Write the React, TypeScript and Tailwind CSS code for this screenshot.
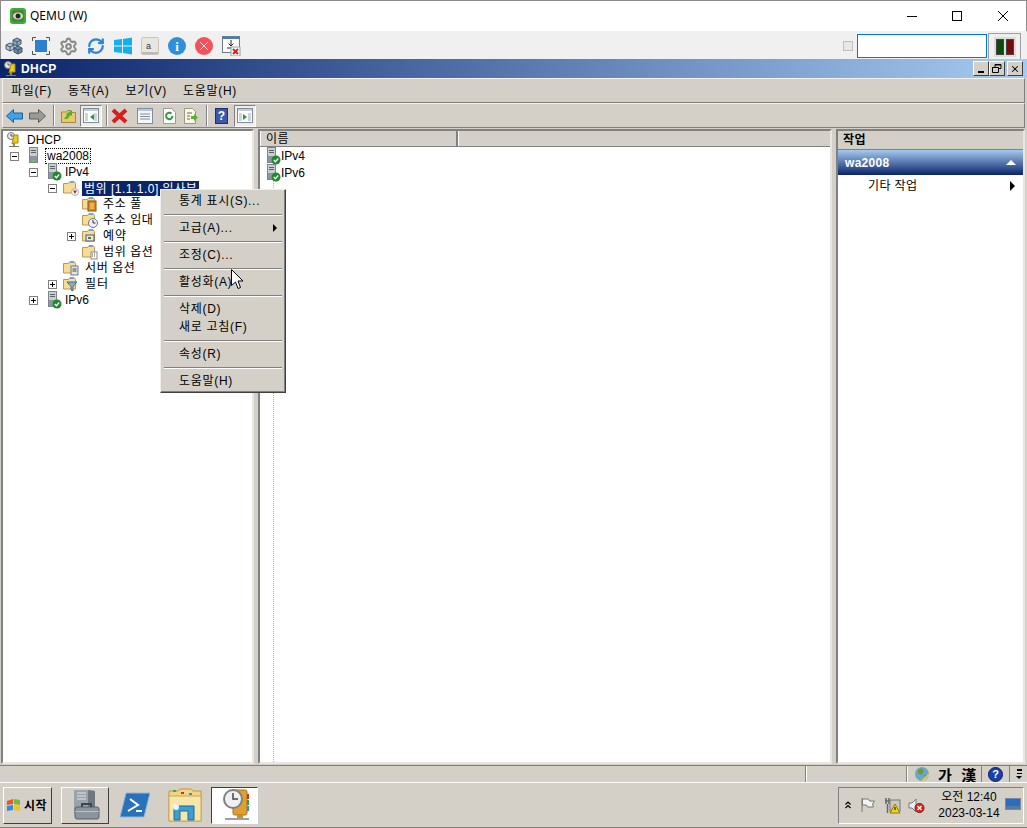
import { Fragment, type ReactNode } from 'react';
import { RefreshCw, Settings, X } from 'lucide-react';

const FONT = "font-['Liberation_Sans','Noto_Sans_CJK_KR',sans-serif]";

function Srv({ className = '', ok = true }: { className?: string; ok?: boolean }) {
  return (
    <svg width="16" height="18" viewBox="0 0 16 18" className={`shrink-0 ${className}`}>
      <rect x="2.500" y="0.500" width="8" height="15" fill="#c9ced2" stroke="#7d858c" />
      <rect x="4" y="3" width="5" height="1" fill="#59626a" />
      <rect x="4" y="5" width="5" height="1" fill="#59626a" />
      <rect x="3" y="9" width="7" height="6" fill="#8d969e" />
      {ok ? (
        <>
          <circle cx="11" cy="13" r="4.500" fill="#1f8a2c" />
          <path d="M8.800 13l1.600 1.700 2.800-3.200" stroke="#fff" strokeWidth="1.300" fill="none" />
        </>
      ) : (
        <rect x="5" y="13" width="2" height="2" fill="#5fd040" />
      )}
    </svg>
  );
}

function Folder({ children }: { children?: ReactNode }) {
  return (
    <svg width="16" height="16" viewBox="0 0 16 16" className="shrink-0">
      <path d="M0.500 3.500h5l1 -1.500h5l1 1.500v9.500h-12z" fill="#f7dc95" stroke="#b99a55" />
      <rect x="7" y="1" width="4" height="2" fill="#6ea9d8" />
      {children}
    </svg>
  );
}

function Tree({ className = '' }: { className?: string }) {
  return (
    <svg width="16" height="16" viewBox="0 0 16 16" className={`shrink-0 ${className}`}>
      <circle cx="5" cy="4" r="3.500" fill="#e8e8e8" stroke="#777" />
      <path d="M5 2v2h2" stroke="#555" fill="none" />
      <path d="M8 3h4v8H8l-2 1z" fill="#e9cc1e" stroke="#a08a10" />
      <rect x="7" y="11" width="2" height="3" fill="#a58b2a" />
      <rect x="3" y="14" width="10" height="1" fill="#777" />
    </svg>
  );
}

function Expander({ open }: { open: boolean }) {
  return (
    <span className="relative w-[9px] h-[9px] shrink-0 border border-[#808080] bg-white flex items-center justify-center">
      <span className="w-[5px] h-px bg-black" />
      {!open && <span className="absolute w-px h-[5px] bg-black" />}
    </span>
  );
}

function Row({ pad, gap, exp, icon, children }: { pad: string; gap: string; exp?: 'open' | 'closed'; icon: ReactNode; children: ReactNode }) {
  return (
    <div className={`h-4 flex items-center ${pad}`}>
      {exp ? <Expander open={exp === 'open'} /> : <span className="w-[9px] shrink-0" />}
      <span className={gap}>{icon}</span>
      {children}
    </div>
  );
}

function Sep() {
  return <div className="w-px h-[21px] mx-[3px] bg-[#808080] border-r border-white box-content" />;
}

function PressedBtn({ arrow }: { arrow: string }) {
  return (
    <span className="w-[22px] h-[22px] bg-[#efedea] border border-t-[#808080] border-l-[#808080] border-r-white border-b-white flex items-center justify-center">
      <svg width="16" height="15" viewBox="0 0 16 15">
        <rect x="0.500" y="0.500" width="15" height="14" fill="#fff" stroke="#7f8c9a" />
        <rect x="1" y="1" width="14" height="2" fill="#c2ccd8" />
        <rect x="2" y="5" width="3" height="8" fill="#c9d4de" />
        <rect x="11" y="5" width="3" height="8" fill="#c9d4de" />
        <path d={arrow} fill="#1f9a3c" />
      </svg>
    </span>
  );
}

const menu = [
  ['통계 표시(S)...'],
  ['고급(A)...'],
  ['조정(C)...'],
  ['활성화(A)'],
  ['삭제(D)', '새로 고침(F)'],
  ['속성(R)'],
  ['도움말(H)'],
];

export default function App() {
  return (
    <div className={`${FONT} w-[1027px] h-[828px] overflow-hidden relative flex flex-col bg-[#d4d0c8] text-[12px] leading-none text-black`}>
      {/* qemu title */}
      <div className="h-[31px] bg-white border-t border-l border-r border-[#8c8c8c] flex items-center shrink-0">
        <svg width="16" height="16" viewBox="0 0 16 16" className="ml-[9px] mr-[4px]">
          <rect width="16" height="16" rx="3" fill="#2fb52f" />
          <rect x="2" y="2" width="12" height="12" rx="2" fill="#5a7a4a" />
          <ellipse cx="8" cy="8" rx="5" ry="3.500" fill="#d5e0c8" />
          <circle cx="8" cy="8" r="2.500" fill="#1d2d1d" />
        </svg>
        <span className="font-['Noto_Sans','Noto_Sans_CJK_KR',sans-serif] text-[12px]">QEMU (W)</span>
        <div className="ml-auto flex items-center">
          <span className="w-[10px] h-px bg-black mr-[35px]" />
          <span className="w-[10px] h-[10px] border border-black mr-[36px]" />
          <svg width="10" height="10" viewBox="0 0 10 10" className="mr-[18px]"><path d="M0 0l10 10M10 0L0 10" stroke="#000" /></svg>
        </div>
      </div>

      {/* qemu toolbar */}
      <div className="h-[28px] bg-[#f0f0f0] border-l border-[#8c8c8c] flex items-center shrink-0">
        <div className="flex items-center gap-[9px] pl-[4px] pt-[2px]">
          <svg width="18" height="18" viewBox="0 0 18 18">
            <path d="M8 3l4-2 4 2v4l-4 2-4-2z" fill="#8aa8c0" stroke="#46596a" />
            <path d="M8 3l4 2 4-2M12 5v4" fill="none" stroke="#46596a" />
            <path d="M1 8l4-2 4 2v4l-4 2-4-2z" fill="#b4c8d8" stroke="#46596a" />
            <path d="M1 8l4 2 4-2M5 10v4" fill="none" stroke="#46596a" />
            <path d="M9 11l4-2 4 2v4l-4 2-4-2z" fill="#6d8ca8" stroke="#3d5568" />
            <path d="M9 11l4 2 4-2M13 13v4" fill="none" stroke="#3d5568" />
          </svg>
          <svg width="18" height="18" viewBox="0 0 18 18">
            <rect x="3" y="3" width="12" height="12" fill="#2f7fd0" />
            <path d="M0.500 4V0.500H4M14 0.500h3.500V4M17.500 14v3.500H14M4 17.500H0.500V14" fill="none" stroke="#4a5058" />
          </svg>
          <Settings size={19} strokeWidth={2.600} color="#8a8a8a" />
          <RefreshCw size={18} strokeWidth={3} color="#2a84d8" />
          <svg width="18" height="18" viewBox="0 0 18 18">
            <path d="M0 3l8-1v6.500H0zM9 2l9-1.500v8H9zM0 9.500h8V16l-8-1zM9 9.500h9v8L9 16z" fill="#12b0ee" />
          </svg>
          <svg width="18" height="18" viewBox="0 0 18 18">
            <rect x="0.500" y="0.500" width="17" height="17" rx="1" fill="#e9e6e0" stroke="#c8c4bc" />
            <rect x="1" y="15" width="16" height="2" fill="#bbb" />
            <text x="5" y="12" fontSize="9" fill="#333">a</text>
          </svg>
          <span className="w-[18px] h-[18px] rounded-full bg-[#2f8fd8] flex items-center justify-center"><span className="text-white text-[13px] font-bold font-['Liberation_Serif',serif]">i</span></span>
          <span className="w-[18px] h-[18px] rounded-full bg-[#f4525a] flex items-center justify-center"><X size={14} color="#fff" strokeWidth={1.500} /></span>
          <svg width="19" height="20" viewBox="0 0 19 20">
            <rect x="0.500" y="0.500" width="17" height="16" fill="#fff" stroke="#6d7c8c" />
            <rect x="1" y="1" width="16" height="2" fill="#3f7fc8" />
            <path d="M9 4v5M6.500 7.500L9 10l2.500-2.500M5 12h8" stroke="#222" fill="none" />
            <rect x="9" y="11" width="9" height="9" fill="#fff" stroke="#999" />
            <path d="M11 13l5 5M16 13l-5 5" stroke="#d42020" strokeWidth="2" />
          </svg>
        </div>
        <div className="ml-auto flex items-center pt-[2px]">
          <span className="w-[8px] h-[8px] border border-[#c0c0c0] bg-[#e8e8e8] mr-[4px] box-content" />
          <span className="w-[130px] h-[24px] bg-white border border-[#0078d7] mr-[1px]" />
          <span className="w-[33px] h-[26px] bg-[#f0f0f0] border border-t-[#a0a0a0] border-l-[#a0a0a0] border-r-[#a0a0a0] border-b-0 mr-[6px] flex items-center justify-center">
            <span className="w-[22px] h-[20px] bg-[#dcdcdc] flex items-center justify-center gap-[2px]">
              <span className="w-[8px] h-[16px] bg-[#0c4a0c] border border-[#444]" />
              <span className="w-[8px] h-[16px] bg-[#7a0a0a] border border-[#444]" />
            </span>
          </span>
        </div>
      </div>

      {/* mmc title */}
      <div className="h-[19px] shrink-0 bg-[linear-gradient(90deg,#0a246a_0%,#a6caf0_100%)] flex items-center pl-[3px] pr-[4px]">
        <Tree />
        <span className="ml-[2px] text-white font-bold text-[12px] tracking-[0.4px]">DHCP</span>
        <div className="ml-auto flex items-center">
          {[0, 1].map((i) => (
            <span key={i} className="w-[16px] h-[15px] bg-[#d4d0c8] border border-t-white border-l-white border-r-[#404040] border-b-[#404040] flex items-center justify-center">
              {i === 0 ? <span className="w-[6px] h-[2px] bg-black mt-[6px]" /> : (
                <svg width="10" height="9" viewBox="0 0 10 9"><path d="M3 3V0.500h6v4H7M0.500 3.500h6v5h-6z" fill="none" stroke="#000" /><path d="M0.500 3.500h6M3 1h6" stroke="#000" /></svg>
              )}
            </span>
          ))}
          <span className="w-[16px] h-[15px] ml-[2px] bg-[#d4d0c8] border border-t-white border-l-white border-r-[#404040] border-b-[#404040] flex items-center justify-center">
            <X size={10} strokeWidth={2.500} />
          </span>
        </div>
      </div>

      {/* menu bar */}
      <div className="h-[25px] shrink-0 mx-[2px] border border-t-[#f4f3f0] border-l-[#f4f3f0] border-r-[#808080] border-b-[#808080] flex items-center pl-[8px] gap-[16px] tracking-[0.7px]">
        <span>파일(F)</span>
        <span>동작(A)</span>
        <span>보기(V)</span>
        <span>도움말(H)</span>
      </div>

      {/* mmc toolbar */}
      <div className="h-[25px] shrink-0 mx-[2px] border border-t-[#f4f3f0] border-l-[#f4f3f0] border-r-[#808080] border-b-[#808080] flex items-center pl-[3px]">
        <svg width="17" height="14" viewBox="0 0 17 14"><path d="M0.500 7L7.500 0.500v3.500h9v6h-9v3.500z" fill="#3fa3ea" stroke="#1c5f9c" /></svg>
        <svg width="17" height="14" viewBox="0 0 17 14" className="ml-[6px]"><path d="M16.500 7L9.500 0.500v3.500h-9v6h9v3.500z" fill="#9a9a9a" stroke="#5c5c5c" /></svg>
        <span className="ml-[4px]"><Sep /></span>
        <svg width="15" height="15" viewBox="0 0 15 15" className="ml-[3px]">
          <path d="M0.500 4h5l1-1.500h3v2h5v10h-14z" fill="#ecc968" stroke="#a08a40" />
          <path d="M3 11l3-4-1-1 6-4 0 6-1.500-1-3 4z" fill="#4fb030" />
        </svg>
        <span className="ml-[4px]"><PressedBtn arrow="M11 6v6l-4-3z" /></span>
        <span className="ml-[1px]"><Sep /></span>
        <svg width="17" height="16" viewBox="0 0 17 16"><path d="M2 2l13 12M15 2L2 14" stroke="#d4201e" strokeWidth="4" /></svg>
        <svg width="16" height="16" viewBox="0 0 16 16" className="ml-[9px]">
          <rect x="0.500" y="0.500" width="15" height="15" fill="#f4f6f8" stroke="#7f8c9a" />
          <rect x="1" y="1" width="14" height="2" fill="#b8c8d8" />
          <path d="M3 6h10M3 8.500h10M3 11h10" stroke="#7f8c9a" />
        </svg>
        <svg width="15" height="16" viewBox="0 0 15 16" className="ml-[9px]">
          <path d="M1.500 0.500h8l4 4v11h-12z" fill="#fff" stroke="#9a9a9a" />
          <path d="M10.500 8a3.200 3.200 0 1 1 -1-2.400" fill="none" stroke="#2e9a3a" strokeWidth="2" />
        </svg>
        <svg width="16" height="16" viewBox="0 0 16 16" className="ml-[6px]">
          <path d="M1.500 0.500h8l3 3v12h-11z" fill="#fbf8e4" stroke="#9a9a7a" />
          <path d="M4 5h5M4 8h3M4 11h3" stroke="#666" />
          <path d="M8 8h3V6l4 3.500-4 3.500v-2H8z" fill="#58b030" />
        </svg>
        <span className="ml-[4px]"><Sep /></span>
        <span className="ml-[4px] w-[13px] h-[16px] bg-[#3a58a8] border border-[#1c2f70] flex items-center justify-center text-white font-bold text-[12px]">?</span>
        <span className="ml-[6px]"><PressedBtn arrow="M6 6v6l4-3z" /></span>
      </div>

      {/* panes */}
      <div className="flex-1 min-h-0 flex pt-px pl-px pr-[2px] gap-[4px]">
        <div className="w-[253px] shrink-0 bg-white border-2 border-t-[#808080] border-l-[#808080] border-r-[#e8e6e0] border-b-[#e8e6e0] pt-px">
          <div className="h-4 flex items-center pl-[3px]">
            <Tree className="mr-[5px]" />
            <span>DHCP</span>
          </div>
          <Row pad="pl-[7px]" gap="ml-[8px] mr-[2px] flex" exp="open" icon={<Srv ok={false} />}>
            <span className="border border-dotted border-black px-px leading-[14px] h-[16px]">wa2008</span>
          </Row>
          <Row pad="pl-[26px]" gap="ml-[8px] mr-[3px] flex" exp="open" icon={<Srv />}><span>IPv4</span></Row>
          <Row pad="pl-[45px]" gap="ml-[6px] mr-[3px] flex" exp="open" icon={
            <Folder><circle cx="12" cy="12" r="3.500" fill="#fff" stroke="#aaa" /><path d="M10 10.500h4L12 14z" fill="#c01818" /></Folder>
          }><span className="bg-[#0a246a] text-white px-[2px] leading-[16px] h-[15px] tracking-[0.5px] whitespace-nowrap">범위 [1.1.1.0] 임사부</span></Row>
          <Row pad="pl-[64px]" gap="ml-[6px] mr-[5px] flex" icon={
            <Folder><rect x="6" y="5" width="8" height="10" fill="#d88a1e" stroke="#8a5410" /><path d="M8 8h4M8 10h4M8 12h4" stroke="#f8d890" /></Folder>
          }><span className="tracking-[0.6px]">주소 풀</span></Row>
          <Row pad="pl-[64px]" gap="ml-[6px] mr-[5px] flex" icon={
            <Folder><circle cx="11" cy="11" r="4.500" fill="#eef1f4" stroke="#6a7580" /><path d="M11 8v3h2.500" stroke="#333" fill="none" /></Folder>
          }><span className="tracking-[0.6px]">주소 임대</span></Row>
          <Row pad="pl-[64px]" gap="ml-[6px] mr-[5px] flex" exp="closed" icon={
            <Folder><rect x="4" y="7" width="8" height="6" fill="#e8e8e0" stroke="#557" /><rect x="6" y="9" width="3" height="2" fill="#3a8a3a" /></Folder>
          }><span className="tracking-[1px]">예약</span></Row>
          <Row pad="pl-[64px]" gap="ml-[6px] mr-[5px] flex" icon={
            <Folder><rect x="9" y="8" width="6" height="7" fill="#fff" stroke="#888" /><path d="M10 10h4M10 12h4" stroke="#555" strokeDasharray="1 1" /></Folder>
          }><span className="tracking-[0.6px]">범위 옵션</span></Row>
          <Row pad="pl-[45px]" gap="ml-[6px] mr-[6px] flex" icon={
            <Folder><rect x="8" y="6" width="7" height="9" fill="#dfe5ea" stroke="#778" /><path d="M9.500 9h4M9.500 11h4" stroke="#445" /></Folder>
          }><span className="tracking-[0.6px]">서버 옵션</span></Row>
          <Row pad="pl-[45px]" gap="ml-[6px] mr-[6px] flex" exp="closed" icon={
            <Folder><path d="M4 6h10l-4 4.500V15l-2-1v-3.500z" fill="#8cb0c8" stroke="#4a6a80" /></Folder>
          }><span className="tracking-[1px]">필터</span></Row>
          <Row pad="pl-[26px]" gap="ml-[8px] mr-[3px] flex" exp="closed" icon={<Srv />}><span>IPv6</span></Row>
        </div>

        <div className="flex-1 min-w-0 bg-white border-2 border-t-[#808080] border-l-[#808080] border-r-[#e8e6e0] border-b-[#e8e6e0] flex flex-col">
          <div className="h-[16px] shrink-0 bg-[#d4d0c8] border-b border-[#808080] flex">
            <div className="w-[198px] border-r-2 border-r-[#808080] border-l border-l-white pl-[5px] flex items-center tracking-[0.4px]">이름</div>
            <div className="flex-1 border-l border-white" />
          </div>
          <div className="flex items-center h-[17px] pl-[5px]"><Srv /><span>IPv4</span></div>
          <div className="flex items-center h-[17px] pl-[5px]"><Srv /><span>IPv6</span></div>
          <div className="flex-1 ml-[13px] border-l border-dotted border-[#b0b0b0]" />
        </div>

        <div className="w-[189px] shrink-0 bg-white border-2 border-t-[#808080] border-l-[#808080] border-r-[#e8e6e0] border-b-[#e8e6e0] flex flex-col">
          <div className="h-[19px] shrink-0 bg-[#d4d0c8] border-b border-[#808080] pl-[5px] flex items-center font-bold tracking-[0.4px]">작업</div>
          <div className="h-[25px] shrink-0 bg-[linear-gradient(180deg,#a6caf0_0%,#0a246a_100%)] flex items-center pl-[7px] pr-[7px] text-white font-bold tracking-[0.3px]">
            <span>wa2008</span>
            <span className="ml-auto w-0 h-0 border-x-[5px] border-x-transparent border-b-[5px] border-b-white" />
          </div>
          <div className="h-[20px] mt-px flex items-center pl-[30px] pr-[8px]">
            <span className="tracking-[0.4px]">기타 작업</span>
            <span className="ml-auto w-0 h-0 border-y-[5px] border-y-transparent border-l-[5px] border-l-black" />
          </div>
        </div>
      </div>

      {/* status bar */}
      <div className="h-[18px] shrink-0 pt-px">
        <div className="h-full border-t border-[#808080] flex">
          <div className="w-[806px] border-r border-[#808080]" />
          <div className="w-[101px] border-l border-r border-l-white border-r-[#808080]" />
          <div className="flex-1 flex items-center pl-[6px] border-l border-white">
            <svg width="17" height="17" viewBox="0 0 17 17">
              <circle cx="8" cy="8" r="7" fill="#6aa7c8" />
              <path d="M4 4l4-2 2 4-3 3-3-2zM10 9l4 0-2 4z" fill="#6e9a3c" />
              <path d="M6 16l8-8 2 1-8 8z" fill="#e8c860" />
            </svg>
            <span className="ml-[7px] font-bold text-[15px] tracking-[3px] whitespace-nowrap font-['Noto_Sans_CJK_KR',sans-serif]">가 漢</span>
            <span className="ml-[2px] h-[16px] border-l border-[#808080]" />
            <span className="ml-[6px] w-[15px] h-[15px] rounded-full bg-[#1a3fb0] border border-[#0c1c60] text-white text-[11px] font-bold flex items-center justify-center">?</span>
            <span className="ml-[6px] h-[16px] border-l border-[#808080]" />
            <span className="ml-[6px] flex flex-col items-center gap-[2px]">
              <span className="w-[5px] h-[2px] bg-black" />
              <span className="w-[5px] h-[1px] bg-black" />
              <span className="w-0 h-0 border-x-[3px] border-x-transparent border-t-[3px] border-t-black" />
            </span>
          </div>
        </div>
      </div>

      {/* taskbar */}
      <div className="h-[46px] shrink-0 border-t border-white border-b border-b-[#808080] flex items-center pl-[3px] pr-[3px]">
        <div className="w-[49px] h-[37px] border border-t-white border-l-white border-r-[#404040] border-b-[#404040] flex items-center pl-[2px]">
          <svg width="16" height="16" viewBox="0 0 16 16">
            <path d="M1 4l6-2v5l-6 1z" fill="#e8562a" />
            <path d="M8 2l6 1v5l-6-1z" fill="#7ab82e" />
            <path d="M1 9l6-1v5l-6 1z" fill="#2f8ce0" />
            <path d="M8 8l6 1v5l-6-1z" fill="#f2c21e" />
          </svg>
          <span className="ml-[2px] font-bold text-[12px] tracking-[0.4px] font-['Noto_Sans_CJK_KR',sans-serif]">시작</span>
        </div>
        <div className="w-[48px] h-[37px] ml-[9px] border border-t-white border-l-white border-r-[#404040] border-b-[#404040] flex items-center justify-center">
          <svg width="30" height="32" viewBox="0 0 30 32">
            <path d="M4 1h14l7 1v22H4z" fill="#9aa2aa" />
            <path d="M18 1l7 1v22h-7z" fill="#6f7880" />
            <path d="M7 4h9M7 7h9M7 10h9" stroke="#e0e4e8" />
            <rect x="5" y="18" width="24" height="12" rx="2" fill="#8a949e" stroke="#56606a" />
            <path d="M12 18v-3h9v3" fill="none" stroke="#3c444c" strokeWidth="2" />
            <rect x="5" y="22" width="24" height="1" fill="#b8c0c8" />
          </svg>
        </div>
        <svg width="32" height="26" viewBox="0 0 32 26" className="ml-[10px]">
          <path d="M7 1h24l-6 24H1z" fill="#2a72b8" stroke="#8cb8e0" />
          <path d="M11 7l8 6-10 6" stroke="#fff" strokeWidth="2" fill="none" />
          <path d="M17 19h6" stroke="#fff" strokeWidth="2" />
        </svg>
        <svg width="34" height="34" viewBox="0 0 34 34" className="ml-[17px]">
          <path d="M1 3h9l2 -2h11l2 2h8v30H1z" fill="#f2d484" stroke="#b89a50" />
          <rect x="5" y="2" width="3" height="2" fill="#30b030" />
          <rect x="13" y="4" width="3" height="2" fill="#d03020" />
          <rect x="21" y="5" width="3" height="2" fill="#3090d8" />
          <rect x="1" y="8" width="32" height="25" fill="#f8e6a8" stroke="#c8a858" />
          <path d="M6 32V18h20v14h-6v-9h-8v9z" fill="#3ea0d0" stroke="#1d6a98" />
          <circle cx="8" cy="19" r="3" fill="#e8f6ff" />
        </svg>
        <div className="w-[47px] h-[37px] ml-[9px] bg-white border border-t-[#404040] border-l-[#404040] border-r-white border-b-white flex items-center justify-center">
          <svg width="34" height="33" viewBox="0 0 34 33">
            <rect x="15" y="1" width="14" height="25" rx="2" fill="#e0a030" stroke="#a87018" />
            <rect x="29" y="5" width="2" height="5" fill="#d03020" />
            <rect x="29" y="11" width="2" height="5" fill="#30a040" />
            <rect x="29" y="17" width="2" height="5" fill="#3090d8" />
            <circle cx="15" cy="10" r="9" fill="#f0f0f0" stroke="#808080" strokeWidth="2" />
            <path d="M15 4v6h5" stroke="#444" strokeWidth="1.500" fill="none" />
            <rect x="19" y="26" width="6" height="4" fill="#c89030" />
            <rect x="7" y="29" width="24" height="2" fill="#9aa0a6" />
          </svg>
        </div>
        <div className="ml-auto w-[186px] h-[37px] border border-t-[#808080] border-l-[#808080] border-r-white border-b-white flex items-center">
          <svg width="6" height="8" viewBox="0 0 6 8" className="ml-[6px]"><path d="M0.500 3.500L3 1l2.500 2.500M0.500 7L3 4.500 5.500 7" stroke="#000" fill="none" strokeWidth="1.200" /></svg>
          <svg width="16" height="16" viewBox="0 0 16 16" className="ml-[9px]">
            <path d="M2 1v14" stroke="#777" />
            <path d="M2.500 2h6l1 2h5l-2 3 1 3h-6l-1-2h-4z" fill="#f4f4f4" stroke="#777" />
          </svg>
          <svg width="17" height="17" viewBox="0 0 17 17" className="ml-[8px]">
            <path d="M2 1v6M5 1v6M1 4h5M3.500 7v9" stroke="#666" strokeWidth="1.500" />
            <rect x="6" y="3" width="10" height="11" fill="#c9c9c2" stroke="#777" />
            <path d="M11 7l5 9H6z" fill="#f4d020" stroke="#907810" />
            <rect x="10.500" y="10" width="1" height="3" fill="#000" />
          </svg>
          <svg width="17" height="17" viewBox="0 0 17 17" className="ml-[7px]">
            <path d="M1 6h3l4-4v13l-4-4H1z" fill="#eeeeee" stroke="#777" />
            <circle cx="11.500" cy="11" r="4.500" fill="#d62a2a" stroke="#8a1010" />
            <path d="M9.500 9l4 4M13.500 9l-4 4" stroke="#fff" strokeWidth="1.200" />
          </svg>
          <div className="ml-[13px] w-[62px] flex flex-col items-center gap-[3px] leading-[13px] whitespace-nowrap">
            <span>오전 12:40</span>
            <span>2023-03-14</span>
          </div>
          <svg width="16" height="14" viewBox="0 0 16 14" className="ml-[5px]">
            <rect x="0.500" y="0.500" width="15" height="11" fill="#2a6cc0" stroke="#7a8a9a" />
            <rect x="1" y="8" width="14" height="3" fill="#5a7a9a" />
            <rect x="1" y="12" width="5" height="2" fill="#d0d0d0" />
          </svg>
        </div>
      </div>

      {/* context menu */}
      <div className="absolute left-[160px] top-[189px] w-[126px] bg-[#d4d0c8] border border-t-[#f0eeea] border-l-[#f0eeea] border-r-[#404040] border-b-[#404040] shadow-[inset_-1px_-1px_0_#808080] pt-[2px] pb-[2px] px-[2px] tracking-[0.7px]">
        {menu.map((group, i) => (
          <Fragment key={i}>
            {i > 0 && <div className="h-[9px] flex flex-col justify-center mx-px"><div className="h-px bg-[#808080]" /><div className="h-px bg-white" /></div>}
            {group.map((label) => (
              <div key={label} className="h-[18px] flex items-center pl-[16px] pr-[6px] whitespace-nowrap">
                <span>{label}</span>
                {label.startsWith('고급') && <span className="ml-auto w-0 h-0 border-y-[4px] border-y-transparent border-l-[4px] border-l-black" />}
              </div>
            ))}
          </Fragment>
        ))}
      </div>

      {/* mouse cursor */}
      <svg width="13" height="21" viewBox="0 0 13 21" className="absolute left-[231px] top-[269px]">
        <path d="M0.500 0.500v16l4-3.500 2.500 6.500 2.500-1-2.500-6.500h5z" fill="#fff" stroke="#000" />
      </svg>
    </div>
  );
}
